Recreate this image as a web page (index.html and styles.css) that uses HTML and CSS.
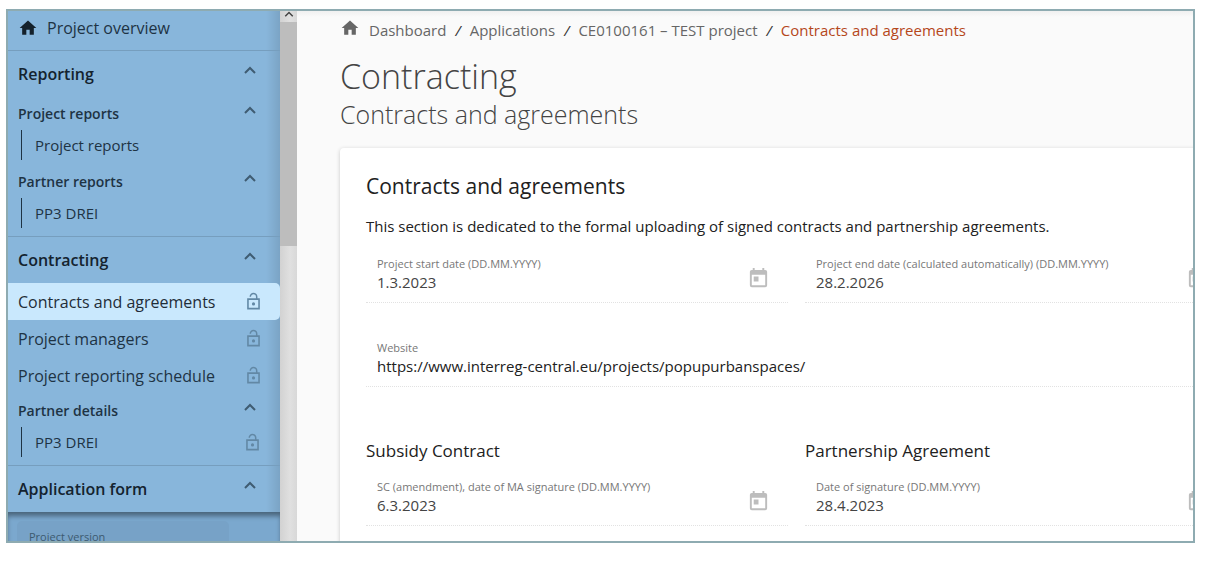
FILE: index.html
```html
<!DOCTYPE html>
<html lang="en">
<head>
	<meta charset="utf-8">
	<title>Contracts and agreements</title>
	<link rel="stylesheet" href="styles.css">
</head>
<body>
	<!-- shared icons -->
	<svg class="sprite" aria-hidden="true">
		<symbol id="home" viewBox="0 0 24 24"><path d="M10 20v-6h4v6h5v-8h3L12 3 2 12h3v8z"/></symbol>
		<symbol id="lock" viewBox="0 0 24 24"><path d="M12 17a2 2 0 1 0 0-4 2 2 0 0 0 0 4zm6-9h-1V6c0-2.76-2.24-5-5-5S7 3.24 7 6h1.9c0-1.71 1.39-3.1 3.1-3.1s3.1 1.39 3.1 3.1v2H4v14h16V8zm0 12H6V10h12z"/></symbol>
		<symbol id="up" viewBox="0 0 12 8"><path d="M1 7l5-5 5 5" fill="none" stroke="currentColor" stroke-width="2"/></symbol>
		<symbol id="today" viewBox="0 0 24 24"><path d="M19 3h-1V1h-2v2H8V1H6v2H5a2 2 0 0 0-2 2v14a2 2 0 0 0 2 2h14a2 2 0 0 0 2-2V5a2 2 0 0 0-2-2zm0 16H5V8h14zM7 10h5v5H7z"/></symbol>
	</svg>

	<div class="frame">
		<nav class="sidebar">
			<a href="#" class="overview"><svg class="icon"><use href="#home"/></svg>Project overview</a>

			<div class="section">
				<button class="title"><span>Reporting</span><svg class="chevron"><use href="#up"/></svg></button>
				<button class="subtitle"><span>Project reports</span><svg class="chevron"><use href="#up"/></svg></button>
				<a href="#" class="leaf"><span>Project reports</span></a>
				<button class="subtitle next"><span>Partner reports</span><svg class="chevron"><use href="#up"/></svg></button>
				<a href="#" class="leaf"><span>PP3 DREI</span></a>
			</div>

			<div class="section">
				<button class="title"><span>Contracting</span><svg class="chevron"><use href="#up"/></svg></button>
				<a href="#" class="item active"><span>Contracts and agreements</span><svg class="lock"><use href="#lock"/></svg></a>
				<a href="#" class="item"><span>Project managers</span><svg class="lock"><use href="#lock"/></svg></a>
				<a href="#" class="item"><span>Project reporting schedule</span><svg class="lock"><use href="#lock"/></svg></a>
				<button class="subtitle"><span>Partner details</span><svg class="chevron"><use href="#up"/></svg></button>
				<a href="#" class="leaf"><span>PP3 DREI</span><svg class="lock"><use href="#lock"/></svg></a>
			</div>

			<button class="title"><span>Application form</span><svg class="chevron"><use href="#up"/></svg></button>

			<div class="version">
				<div class="version-box">Project version</div>
			</div>
		</nav>

		<div class="scrollbar">
			<div class="arrow"><svg class="chevron"><use href="#up"/></svg></div>
			<div class="thumb"></div>
		</div>

		<main class="content">
			<div class="breadcrumb">
				<svg class="icon"><use href="#home"/></svg>
				<a href="#">Dashboard</a><i>/</i>
				<a href="#">Applications</a><i>/</i>
				<a href="#">CE0100161 – TEST project</a><i>/</i>
				<a href="#" class="current">Contracts and agreements</a>
			</div>

			<h1>Contracting</h1>
			<p class="page-subtitle">Contracts and agreements</p>

			<div class="card">
				<h2>Contracts and agreements</h2>
				<p class="intro">This section is dedicated to the formal uploading of signed contracts and partnership agreements.</p>

				<div class="row">
					<div class="field">
						<div class="text">
							<label for="start-date">Project start date (DD.MM.YYYY)</label>
							<input type="text" id="start-date" value="1.3.2023" disabled>
						</div>
						<svg class="today"><use href="#today"/></svg>
					</div>
					<div class="field">
						<div class="text">
							<label for="end-date">Project end date (calculated automatically) (DD.MM.YYYY)</label>
							<input type="text" id="end-date" value="28.2.2026" disabled>
						</div>
						<svg class="today"><use href="#today"/></svg>
					</div>
				</div>

				<div class="field website">
					<div class="text">
						<label for="website">Website</label>
						<input type="text" id="website" value="https://www.interreg-central.eu/projects/popupurbanspaces/" readonly>
					</div>
				</div>

				<div class="row">
					<div>
						<h3>Subsidy Contract</h3>
						<div class="field">
							<div class="text">
								<label for="sc-date">SC (amendment), date of MA signature (DD.MM.YYYY)</label>
								<input type="text" id="sc-date" value="6.3.2023" disabled>
							</div>
							<svg class="today"><use href="#today"/></svg>
						</div>
					</div>
					<div>
						<h3>Partnership Agreement</h3>
						<div class="field">
							<div class="text">
								<label for="pa-date">Date of signature (DD.MM.YYYY)</label>
								<input type="text" id="pa-date" value="28.4.2023" disabled>
							</div>
							<svg class="today"><use href="#today"/></svg>
						</div>
					</div>
				</div>
			</div>
		</main>
	</div>
</body>
</html>
```
FILE: styles.css
```css
* {
	box-sizing: border-box;
}

body {
	margin: 0;
	padding: 9px 10px 0 6px;
	background: #fff;
	color: #212121;
	font-family: "Open Sans", sans-serif;
	font-size: 15px;
	line-height: 20px;
}

a {
	color: inherit;
	text-decoration: none;
}

button {
	border: none;
	background: none;
	font-family: inherit;
	text-align: left;
	cursor: pointer;
}

svg {
	flex: none;
	fill: currentColor;
}

.sprite {
	display: none;
}

.icon {
	width: 20px;
	height: 20px;
}

.frame {
	display: flex;
	height: calc(100vh - 32px);
	border: 2px solid #8eabb1;
	overflow: hidden;
}

/* Sidebar */
.sidebar {
	display: flex;
	flex-direction: column;
	flex: none;
	width: 272px;
	background: linear-gradient(to right, transparent 258px, rgba(0, 0, 0, 0.1)), #88b6db;
	color: #1e3344;
}

.overview {
	display: flex;
	flex: none;
	align-items: center;
	gap: 9px;
	height: 40px;
	padding: 0 10px 5px;
	border-bottom: 1px solid #769ebe;
	font-size: 16px;
}

.overview .icon {
	color: #14212b;
}

.section {
	flex: none;
	padding-bottom: 8px;
	border-bottom: 1px solid #769ebe;
}

.title,
.subtitle,
.item,
.leaf {
	display: flex;
	align-items: center;
	justify-content: space-between;
	width: 100%;
	padding: 0 24px 0 10px;
}

.title {
	flex: none;
	height: 46px;
	color: #14232f;
	font-size: 16px;
	font-weight: 600;
}

.subtitle {
	height: 33px;
	color: #1e3344;
	font-size: 14px;
	font-weight: 600;
}

.next {
	margin-top: 5px;
}

.item {
	height: 37px;
	padding-right: 17px;
	font-size: 16px;
}

.active {
	border-radius: 0 5px 5px 0;
	background: #c9e8fd;
	color: #1f2d38;
}

.leaf {
	height: 30px;
	padding-right: 18px;
}

.leaf span {
	margin-left: 3px;
	padding: 5px 0 5px 13px;
	border-left: 1px solid #1e3344;
}

.chevron {
	width: 12px;
	height: 8px;
	margin-bottom: 8px;
	color: #3f5c72;
}

.lock {
	width: 19px;
	height: 19px;
	color: #6288a5;
}

.version {
	flex: 1;
	padding: 9px 51px 0 9px;
	background: #7ba8ce;
	box-shadow: inset 0 5px 5px -1px rgba(0, 0, 0, 0.4);
}

.version-box {
	height: 100%;
	padding: 6px 12px;
	border-radius: 5px 5px 0 0;
	background: #77a2c7;
	color: #3d5a70;
	font-size: 11px;
}

.scrollbar {
	flex: none;
	width: 17px;
	background: linear-gradient(to right, #d2d2d2, #e0e0e0 60%, #d8d8d8);
}

.arrow {
	display: flex;
	align-items: flex-start;
	justify-content: center;
	height: 11px;
}

.arrow .chevron {
	width: 10px;
	height: 6px;
	color: #444;
}

.thumb {
	height: 224px;
	background: #bdbdbd;
}

/* Page */
.content {
	flex: 1;
	min-width: 0;
	padding: 7px 0 0 43px;
	background: linear-gradient(#f0f0f0, #fafafa 6px);
}

.breadcrumb {
	display: flex;
	align-items: center;
	height: 24px;
	color: #666;
	white-space: nowrap;
}

.breadcrumb .icon {
	margin: 0 9px 4px 0;
}

.breadcrumb i {
	margin: 0 9px;
	color: #333;
}

.breadcrumb .current {
	color: #b5471a;
}

h1,
h2,
h3,
p {
	margin: 0;
	font-weight: 400;
}

h1 {
	margin-top: 12px;
	color: #444;
	font-size: 34px;
	font-weight: 300;
	line-height: 44px;
}

.page-subtitle {
	color: #444;
	font-size: 25px;
	font-weight: 300;
	line-height: 32px;
}

.card {
	margin: 18px -60px 0 0;
	padding: 24px 26px;
	height: 100%;
	border-radius: 4px;
	background: #fff;
	box-shadow: 0 1px 4px rgba(0, 0, 0, 0.2);
}

h2 {
	font-size: 21px;
	line-height: 28px;
}

.intro {
	margin: 16px 0 20px;
}

.row {
	display: grid;
	grid-template-columns: 1fr 1fr;
	gap: 17px;
}

.field {
	display: flex;
	justify-content: space-between;
	height: 47px;
	padding: 0 18px 0 11px;
	border-bottom: 1px dotted #e2e2e2;
}

.text {
	flex: 1;
}

label {
	display: block;
	color: #777;
	font-size: 11px;
	line-height: 16px;
	white-space: nowrap;
}

input {
	display: block;
	width: 100%;
	height: 20px;
	padding: 0;
	border: none;
	background: none;
	color: #212121;
	font-family: inherit;
	font-size: 15px;
}

input:disabled {
	color: #444;
}

.today {
	width: 23px;
	height: 23px;
	margin-top: 11px;
	color: #bdbdbd;
}

.website {
	margin: 37px 0 54px;
}

h3 {
	margin-bottom: 18px;
	font-size: 17px;
	line-height: 20px;
}
```
